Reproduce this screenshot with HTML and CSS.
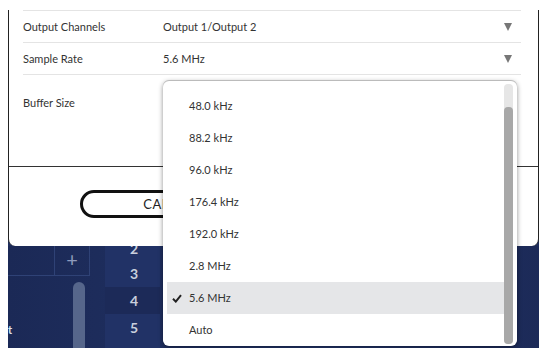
FILE: index.html
```html
<!DOCTYPE html>
<html lang="en">
<head>
  <meta charset="UTF-8" />
  <title>Audio Settings</title>
  <link rel="stylesheet" href="styles.css">
</head>
<body>
  <div class="window">
    <div class="dialog">
      <div class="rows">
        <div class="row">
          <span class="label">Output Channels</span>
          <span class="value">Output 1/Output 2</span>
          <span class="caret"></span>
        </div>
        <div class="row">
          <span class="label">Sample Rate</span>
          <span class="value">5.6 MHz</span>
          <span class="caret"></span>
        </div>
        <div class="row row-buffer">
          <span class="label">Buffer Size</span>
        </div>
      </div>
      <div class="footer">
        <button class="btn">CANCEL</button>
      </div>
    </div>

    <div class="app">
      <div class="tracks">
        <div class="track-head">
          <div class="cell"></div>
          <div class="cell cell-add">+</div>
        </div>
        <div class="track-body">
          <span class="track-name">t</span>
          <div class="pill"></div>
        </div>
      </div>
      <div class="numbers">
        <div class="num num-cut">2</div>
        <div class="num">3</div>
        <div class="num num-dark">4</div>
        <div class="num">5</div>
      </div>
    </div>

    <div class="menu">
      <ul class="options">
        <li>48.0 kHz</li>
        <li>88.2 kHz</li>
        <li>96.0 kHz</li>
        <li>176.4 kHz</li>
        <li>192.0 kHz</li>
        <li>2.8 MHz</li>
        <li class="selected">
          <svg class="check" width="10" height="9" viewBox="0 0 10 9"><path d="M1 4.8 L3.8 7.6 L9 1.2" fill="none" stroke="#222" stroke-width="2"/></svg>
          5.6 MHz
        </li>
        <li>Auto</li>
      </ul>
      <div class="scroll"><div class="thumb"></div></div>
    </div>
  </div>
</body>
</html>
```

FILE: styles.css
```css
body {
  margin: 0;
  background: #fff;
  font-family: Lato, "Open Sans", sans-serif;
  color: #333;
}
.window {
  position: relative;
  margin-left: 8px;
  padding-top: 10px;
  width: 531px;
  height: 338px;
  background: linear-gradient(#fff 0 210px, #1f2e5c 210px);
}
.dialog {
  width: 529px;
  height: 236px;
  background: #fff;
  border-left: 1px solid #222;
  border-right: 1px solid #222;
  border-radius: 0 0 7px 7px;
  display: flex;
  flex-direction: column;
}
.rows {
  padding: 0 17px 0 14px;
  height: 156px;
  border-bottom: 1px solid #333;
}
.row {
  display: flex;
  align-items: center;
  height: 31px;
  border-top: 1px solid #e4e4e4;
  font-size: 11px;
}
.row-buffer {
  align-items: flex-start;
  padding-top: 21px;
  height: auto;
}
.label {
  width: 140px;
}
.value {
  flex: 1;
}
.caret {
  width: 0;
  height: 0;
  margin-right: 9px;
  border-left: 4.5px solid transparent;
  border-right: 4.5px solid transparent;
  border-top: 8px solid #777;
}
.footer {
  padding: 23px 0 0 71px;
}
.btn {
  width: 180px;
  height: 28px;
  background: #fff;
  border: 3px solid #111;
  border-radius: 14px;
  font-family: Lato, "Open Sans", sans-serif;
  font-size: 13px;
  letter-spacing: 0.5px;
  color: #222;
}

/* app behind the dialog */
.app {
  display: flex;
  height: 102px;
  background: linear-gradient(90deg, #1b2956, #223468 60%, #1c2a58);
}
.tracks {
  width: 82px;
  display: flex;
  flex-direction: column;
}
.track-head {
  display: flex;
  height: 29px;
  border-bottom: 1px solid #2f4276;
}
.cell {
  width: 47px;
  border-right: 1px solid #2f4276;
}
.cell-add {
  width: 35px;
  border-right: 1px solid #2f4276;
  color: #8e9bbd;
  font-size: 20px;
  line-height: 26px;
  text-align: center;
}
.track-body {
  flex: 1;
  display: flex;
  align-items: flex-end;
  padding-top: 6px;
}
.track-name {
  width: 65px;
  margin-bottom: 12px;
  color: #dfe3ee;
  font-size: 11px;
  font-weight: bold;
}
.pill {
  align-self: stretch;
  width: 12px;
  background: #56668b;
  border-radius: 6px 6px 0 0;
}
.numbers {
  margin-left: 15px;
  width: 55px;
  display: flex;
  flex-direction: column;
  background: #213266;
}
.num {
  height: 27px;
  padding-left: 25px;
  color: #c9cfdd;
  font-size: 14px;
  font-weight: bold;
  line-height: 27px;
}
.num-cut {
  height: 14px;
  line-height: 6px;
  overflow: hidden;
}
.num-dark {
  background: #1c2a58;
}

/* open sample rate menu */
.menu {
  position: absolute;
  left: 155px;
  top: 81px;
  width: 354px;
  height: 265px;
  background: #fff;
  border-radius: 6px;
  box-shadow: 0 -1px 0 #bbb, 0 1px 5px rgba(0, 0, 0, 0.45);
  display: flex;
}
.options {
  list-style: none;
  margin: 0;
  padding: 9px 0 0 4px;
  flex: 1;
}
.options li {
  position: relative;
  height: 32px;
  line-height: 32px;
  padding-left: 22px;
  font-size: 11px;
  color: #333;
}
.options .selected {
  background: #e5e6e8;
}
.check {
  position: absolute;
  left: 5px;
  top: 12px;
}
.scroll {
  width: 9px;
  margin: 3px 4px 2px 0;
  background: #e6e6e6;
  border-radius: 4px;
  display: flex;
  flex-direction: column;
  justify-content: flex-end;
}
.thumb {
  height: 237px;
  background: #a8a8a8;
  border-radius: 4px;
}
```
